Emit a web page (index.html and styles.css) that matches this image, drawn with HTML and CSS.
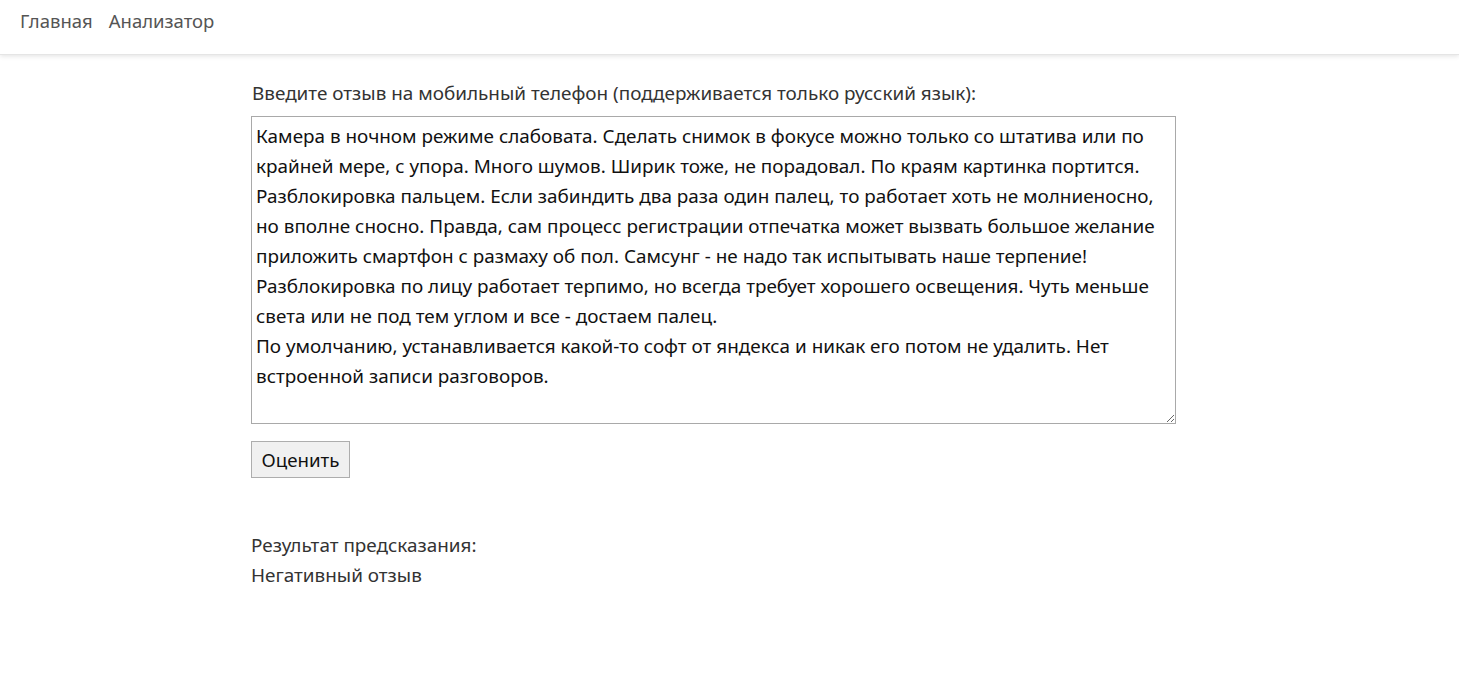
FILE: index.html
```html
<!DOCTYPE html>
<html lang="ru">
<head>
<meta charset="utf-8">
<title>Анализатор</title>
<link rel="stylesheet" href="styles.css">
</head>
<body>
<nav class="navbar">
  <a class="nav-link" href="#">Главная</a>
  <a class="nav-link" href="#">Анализатор</a>
</nav>
<main class="content">
  <form class="review-form">
    <label class="label" for="review">Введите отзыв на мобильный телефон (поддерживается только русский язык):</label>
    <textarea id="review" class="review">Камера в ночном режиме слабовата. Сделать снимок в фокусе можно только со штатива или по крайней мере, с упора. Много шумов. Ширик тоже, не порадовал. По краям картинка портится.
Разблокировка пальцем. Если забиндить два раза один палец, то работает хоть не молниеносно, но вполне сносно. Правда, сам процесс регистрации отпечатка может вызвать большое желание приложить смартфон с размаху об пол. Самсунг - не надо так испытывать наше терпение!
Разблокировка по лицу работает терпимо, но всегда требует хорошего освещения. Чуть меньше света или не под тем углом и все - достаем палец.
По умолчанию, устанавливается какой-то софт от яндекса и никак его потом не удалить. Нет встроенной записи разговоров.</textarea>
    <button type="button" class="btn">Оценить</button>
  </form>
  <section class="result">
    <div>Результат предсказания:</div>
    <div>Негативный отзыв</div>
  </section>
</main>
</body>
</html>
```
FILE: styles.css
```css
html, body {
  margin: 0;
  padding: 0;
  background: #fff;
}
body {
  font-family: "Noto Sans", "Open Sans", sans-serif;
  font-size: 18.9px;
  color: #333;
  line-height: 30px;
}
.navbar {
  height: 55px;
  display: flex;
  align-items: center;
  gap: 16px;
  padding: 0 20px 12px;
  box-shadow: 0 1px 5px rgba(0,0,0,0.12);
  border-bottom: 1px solid #e5e5e5;
  box-sizing: border-box;
}
.nav-link {
  color: #555;
  text-decoration: none;
  font-size: 18.5px;
}
.content {
  padding: 23px 0 0 251px;
}
.review-form {
  display: flex;
  flex-direction: column;
  align-items: flex-start;
}
.label {
  display: block;
  margin: 0 0 8px 1px;
}
.review {
  width: 925px;
  height: 308px;
  box-sizing: border-box;
  border: 1px solid #a9a9a9;
  padding: 4px 4px;
  font: inherit;
  color: #111;
  line-height: 30px;
  resize: both;
  margin: 0;
}
.btn {
  margin-top: 17px;
  height: 37px;
  width: 99px;
  font: inherit;
  font-size: 18.7px;
  color: #111;
  background: #f0f0f0;
  border: 1px solid #adadad;
  border-radius: 0;
  padding: 0;
}
.result {
  margin-top: 52px;
}
```
